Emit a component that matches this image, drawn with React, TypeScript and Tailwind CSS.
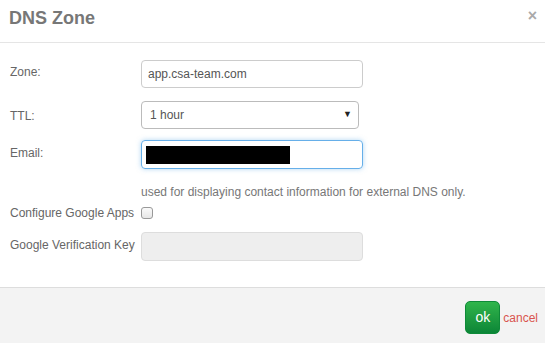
export default function App() {
  return (
    <div className="w-[545px] h-[343px] bg-white flex flex-col font-['Liberation_Sans',Arial,sans-serif] text-[12px] text-[#666]">
      {/* header */}
      <div className="h-[43px] shrink-0 border-b border-[#e5e5e5] flex items-start justify-between pl-[9px] pr-[8px] pt-[7px]">
        <h1 className="text-[18px] leading-[22px] font-bold text-[#777]">DNS Zone</h1>
        <button className="text-[16px] leading-[16px] font-bold text-[#aaa] mt-[1px]">×</button>
      </div>

      {/* form */}
      <div className="flex-1 pl-[10px] pt-[17px]">
        <div className="flex">
          <label className="w-[131px] pt-[3px] leading-[18px]">Zone:</label>
          <div className="w-[222px] h-[28px] border border-[#ccc] rounded-[4px] px-[6px] flex items-center text-[#555]">
            app.csa-team.com
          </div>
        </div>

        <div className="flex mt-[13px]">
          <label className="w-[131px] pt-[6px] leading-[18px]">TTL:</label>
          <div className="w-[218px] h-[28px] border border-[#bbb] rounded-[4px] pl-[8px] pr-[6px] flex items-center justify-between text-[#555]">
            <span>1 hour</span>
            <span className="text-[9px] text-[#222]">▼</span>
          </div>
        </div>

        <div className="flex mt-[11px]">
          <label className="w-[131px] pt-[4px] leading-[18px]">Email:</label>
          <div className="w-[222px] h-[29px] border border-[#66afe9] rounded-[4px] shadow-[0_0_5px_rgba(102,175,233,0.5)] pl-[4px] flex items-center">
            <div className="w-[144px] h-[18px] bg-black" />
          </div>
        </div>

        <div className="flex mt-[14px]">
          <div className="w-[131px]" />
          <p className="leading-[18px] text-[#777]">used for displaying contact information for external DNS only.</p>
        </div>

        <div className="flex mt-[3px] items-center">
          <label className="w-[131px] leading-[18px]">Configure Google Apps</label>
          <div className="w-[12px] h-[12px] border border-[#999] rounded-[3px] bg-gradient-to-b from-[#fafafa] to-[#e6e6e6]" />
        </div>

        <div className="flex mt-[10px]">
          <label className="w-[131px] pt-[4px] leading-[18px]">Google Verification Key</label>
          <div className="w-[222px] h-[29px] border border-[#ddd] rounded-[4px] bg-[#eee]" />
        </div>
      </div>

      {/* footer */}
      <div className="h-[56px] shrink-0 border-t border-[#ddd] bg-[#f3f3f3] flex items-center justify-end pr-[7px] gap-[3px] pt-[4px]">
        <button className="w-[35px] h-[33px] rounded-[5px] bg-gradient-to-b from-[#2fb54b] to-[#0b8637] text-white text-[14px] border border-[#0e8a38]">
          ok
        </button>
        <span className="text-[12px] text-[#d9534f]">cancel</span>
      </div>
    </div>
  );
}
